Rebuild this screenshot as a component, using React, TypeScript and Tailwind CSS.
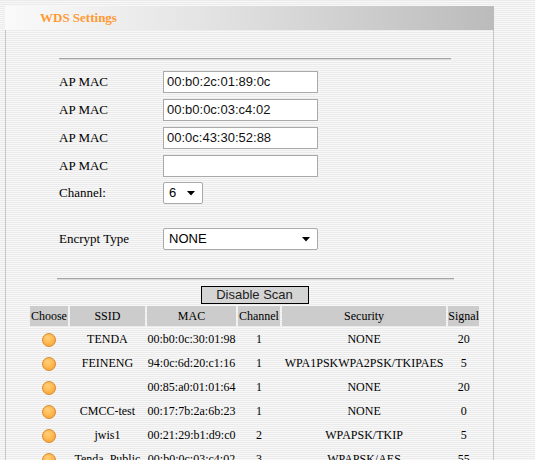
const stripes =
  "bg-[repeating-linear-gradient(to_bottom,#ebebeb_0px,#ebebeb_1px,#f8f8f8_1px,#f8f8f8_2px)]";

type Row = {
  ssid: string;
  mac: string;
  channel: string;
  security: string;
  signal: string;
};

const rows: Row[] = [
  { ssid: "TENDA", mac: "00:b0:0c:30:01:98", channel: "1", security: "NONE", signal: "20" },
  { ssid: "FEINENG", mac: "94:0c:6d:20:c1:16", channel: "1", security: "WPA1PSKWPA2PSK/TKIPAES", signal: "5" },
  { ssid: "", mac: "00:85:a0:01:01:64", channel: "1", security: "NONE", signal: "20" },
  { ssid: "CMCC-test", mac: "00:17:7b:2a:6b:23", channel: "1", security: "NONE", signal: "0" },
  { ssid: "jwis1", mac: "00:21:29:b1:d9:c0", channel: "2", security: "WPAPSK/TKIP", signal: "5" },
  { ssid: "Tenda_Public", mac: "00:b0:0c:03:c4:02", channel: "3", security: "WPAPSK/AES", signal: "55" },
];

const macs = ["00:b0:2c:01:89:0c", "00:b0:0c:03:c4:02", "00:0c:43:30:52:88", ""];

function Arrow() {
  return (
    <svg width="8" height="5" viewBox="0 0 8 5">
      <path d="M0 0 H8 L4 4.5 Z" fill="#000" />
    </svg>
  );
}

function Radio() {
  return (
    <span className="inline-block h-[14px] w-[14px] rounded-full border border-[#d98a2b] bg-[radial-gradient(circle_at_40%_35%,#ffd27a,#ffab40_70%)] align-middle" />
  );
}

export default function App() {
  return (
    <div className={`h-[460px] w-[535px] overflow-hidden ${stripes} pl-[5px] pt-[6px] font-['Liberation_Serif',serif] text-[13px] text-black`}>
      <div className="w-[489px]">
        <div className="flex h-[24px] items-center bg-[linear-gradient(to_right,#fafafa,#e4e4e4_40%,#bbbbbb)] pl-[35px]">
          <span className="text-[13px] font-bold text-[#ff9a33]">WDS Settings</span>
        </div>

        <div className="h-[430px] overflow-hidden border-x border-[#c6c6c6]">
          <div className="ml-[53px] mt-[28px] w-[392px] border-t border-b border-t-[#a3a3a3] border-b-[#dcdcdc]" />

          <div className="ml-[53px] mt-[11px] flex flex-col gap-[6px]">
            {macs.map((m, i) => (
              <div key={i} className="flex h-[22px] items-center">
                <span className="w-[104px]">AP MAC</span>
                <div className="flex h-[22px] w-[155px] items-center border border-[#a9a9a9] bg-white px-[3px] font-['Liberation_Sans',sans-serif] text-[13px] text-[#111]">
                  {m}
                </div>
              </div>
            ))}
          </div>

          <div className="ml-[53px] mt-[5px] flex h-[22px] items-center">
            <span className="w-[104px]">Channel:</span>
            <div className="flex h-[22px] w-[40px] items-center justify-between rounded-[2px] border border-[#a9a9a9] bg-white pl-[5px] pr-[7px] font-['Liberation_Sans',sans-serif] text-[13px]">
              <span>6</span>
              <Arrow />
            </div>
          </div>

          <div className="ml-[53px] mt-[24px] flex h-[22px] items-center">
            <span className="w-[104px]">Encrypt Type</span>
            <div className="flex h-[22px] w-[155px] items-center justify-between rounded-[2px] border border-[#a9a9a9] bg-white pl-[5px] pr-[7px] font-['Liberation_Sans',sans-serif] text-[13px]">
              <span>NONE</span>
              <Arrow />
            </div>
          </div>

          <div className="ml-[51px] mt-[28px] w-[397px] border-t border-b border-t-[#a3a3a3] border-b-[#dcdcdc]" />

          <div className="ml-[22px] w-[453px]">
            <div className="mt-[6px] flex justify-center">
              <div className="flex h-[18px] w-[108px] items-center justify-center border border-black bg-[#d4d4d4] font-['Liberation_Sans',sans-serif] text-[13px] text-[#222]">
                Disable Scan
              </div>
            </div>

            <table className="border-separate border-spacing-[2px] text-[12px]">
              <thead>
                <tr className="h-[20px] bg-[#cccccc]">
                  <th className="w-[38px] p-0 font-normal">Choose</th>
                  <th className="w-[76px] p-0 font-normal">SSID</th>
                  <th className="w-[89px] p-0 font-normal">MAC</th>
                  <th className="w-[42px] p-0 font-normal">Channel</th>
                  <th className="w-[165px] p-0 font-normal">Security</th>
                  <th className="w-[30px] p-0 font-normal">Signal</th>
                </tr>
              </thead>
              <tbody>
                {rows.map((r) => (
                  <tr key={r.mac} className="h-[22px] text-center">
                    <td className="p-0"><Radio /></td>
                    <td className="p-0">{r.ssid}</td>
                    <td className="p-0">{r.mac}</td>
                    <td className="p-0">{r.channel}</td>
                    <td className="p-0">{r.security}</td>
                    <td className="p-0">{r.signal}</td>
                  </tr>
                ))}
              </tbody>
            </table>
          </div>
        </div>
      </div>
    </div>
  );
}
